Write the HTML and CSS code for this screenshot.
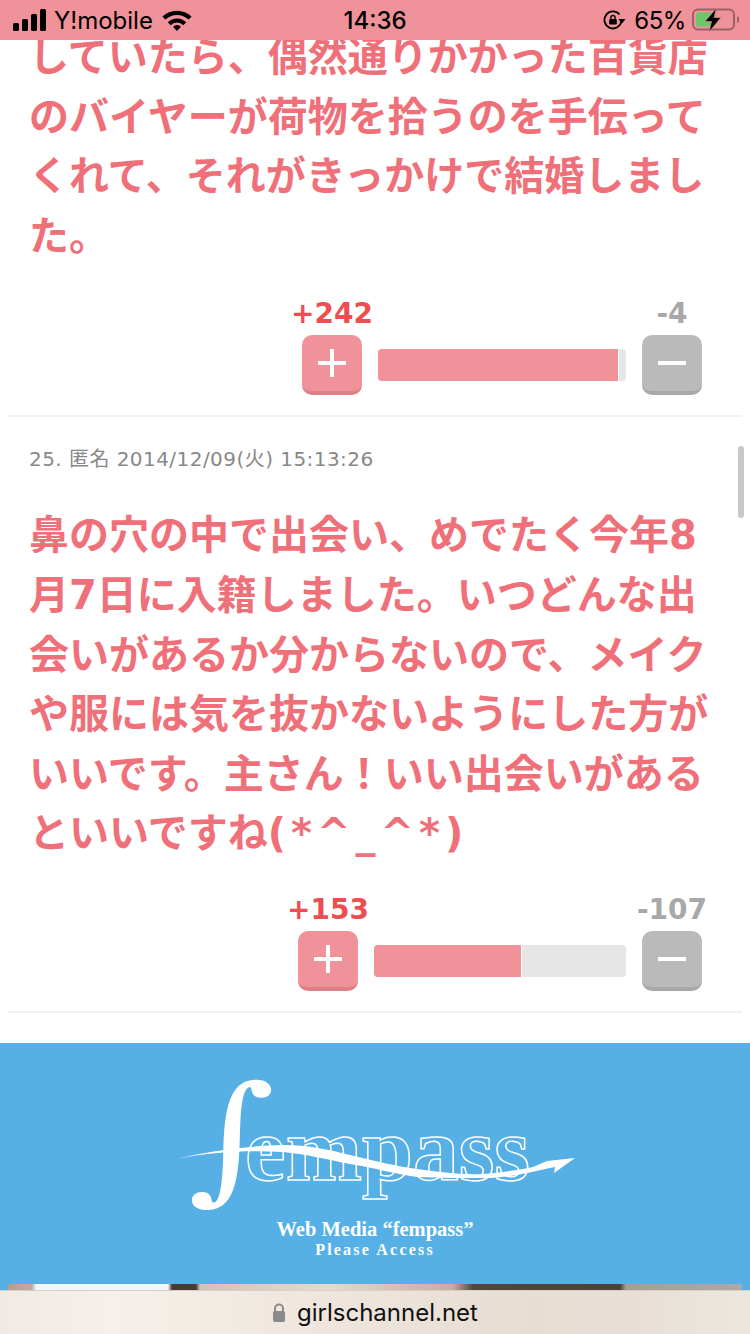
FILE: index.html
```html
<!DOCTYPE html>
<html lang="ja">
  <head>
    <meta charset="UTF-8" />
    <meta name="viewport" content="width=device-width, initial-scale=1.0" />
    <title>girlschannel</title>
    <link rel="stylesheet" href="styles.css">
  </head>
  <body>
    <div class="status-bar">
      <div class="status-left">
        <svg class="signal-icon" width="34" height="22" viewBox="0 0 34 22">
          <rect x="0" y="14" width="6" height="8" rx="1.5"/>
          <rect x="9" y="10" width="6" height="12" rx="1.5"/>
          <rect x="18" y="5" width="6" height="17" rx="1.5"/>
          <rect x="27" y="0" width="6" height="22" rx="1.5"/>
        </svg>
        <span class="carrier">Y!mobile</span>
        <svg class="wifi-icon" width="30" height="22" viewBox="0 0 30 22">
          <path d="M0.5 7.5 A21 21 0 0 1 29.5 7.5 L26.7 10.6 A17 17 0 0 0 3.3 10.6 Z"/>
          <path d="M5.8 13.2 A13 13 0 0 1 24.2 13.2 L21.4 16.2 A9 9 0 0 0 8.6 16.2 Z"/>
          <path d="M15 22 L11 17.8 A5.5 5.5 0 0 1 19 17.8 Z"/>
        </svg>
      </div>
      <div class="status-time">14:36</div>
      <div class="status-right">
        <svg class="rotate-icon" width="24" height="20" viewBox="0 0 24 20">
          <path d="M18.4 11 A8.5 8.5 0 1 1 16.5 4.5" fill="none" stroke="#000" stroke-width="1.8"/>
          <path d="M15.5 9 L22.5 9 L19 13.5 Z"/>
          <rect x="6.2" y="9" width="7.6" height="5.6" rx="1"/>
          <path d="M7.9 9 V7.6 A2.1 2.1 0 0 1 12.1 7.6 V9" fill="none" stroke="#000" stroke-width="1.4"/>
        </svg>
        <span class="battery-text">65%</span>
        <svg class="battery-icon" width="47" height="24" viewBox="0 0 47 24">
          <rect x="1" y="1.5" width="41" height="20" rx="5" fill="none" stroke="#9d6068" stroke-width="2"/>
          <rect x="4" y="4.5" width="20" height="14" rx="2" fill="#6cc66a"/>
          <path d="M45 8.5 A3 3 0 0 1 45 14.5 Z" fill="#9d6068"/>
          <path d="M24.5 0 L13 13.5 H19.5 L17 24 L29 9.5 H22 Z" stroke="#f09299" stroke-width="0.6"/>
        </svg>
      </div>
    </div>

    <div class="page">
      <div class="comment first">
        <p class="comment-body">していたら、偶然通りかかった百貨店のバイヤーが荷物を拾うのを手伝ってくれて、それがきっかけで結婚しました。</p>
        <div class="votes">
          <div class="vote-col">
            <span class="vote-num plus-num">+242</span>
            <div class="vote-btn plus-btn"><span class="bar-h"></span><span class="bar-v"></span></div>
          </div>
          <div class="meter" style="width: 248px"><div class="meter-fill" style="width: 240px"></div></div>
          <div class="vote-col">
            <span class="vote-num minus-num">-4</span>
            <div class="vote-btn minus-btn"><span class="bar-h"></span></div>
          </div>
        </div>
      </div>

      <div class="comment">
        <p class="comment-meta">25. 匿名 2014/12/09(火) 15:13:26</p>
        <p class="comment-body">鼻の穴の中で出会い、めでたく今年8月7日に入籍しました。いつどんな出会いがあるか分からないので、メイクや服には気を抜かないようにした方がいいです。主さん！いい出会いがあるといいですね<span class="kaomoji">(*^_^*)</span></p>
        <div class="votes tight">
          <div class="vote-col">
            <span class="vote-num plus-num">+153</span>
            <div class="vote-btn plus-btn"><span class="bar-h"></span><span class="bar-v"></span></div>
          </div>
          <div class="meter" style="width: 252px"><div class="meter-fill" style="width: 147px"></div></div>
          <div class="vote-col">
            <span class="vote-num minus-num">-107</span>
            <div class="vote-btn minus-btn"><span class="bar-h"></span></div>
          </div>
        </div>
      </div>

      <div class="banner">
        <svg class="logo" width="450" height="150" viewBox="0 0 450 150">
          <text class="logo-word" x="95" y="120" textLength="285" lengthAdjust="spacingAndGlyphs">empass</text>
          <text class="logo-f" transform="translate(38 125) scale(1.2 1)">∫</text>
          <path class="logo-swoosh" d="M26 99 C60 91 95 86 133 85 C160 85 180 90 200 95 C225 101 245 106 267 109 C290 112 310 115 333 114 C350 113 368 110 383 107 L397 101 L425 98 L404 113 L405 107 C385 111 360 118 333 118 C310 118 290 118 267 117 C245 114 225 108 200 104 C175 99 155 94 133 92 C95 90 60 92 26 99 Z"/>
        </svg>
        <p class="banner-title">Web Media “fempass”</p>
        <p class="banner-sub">Please Access</p>
        <div class="banner-photo"></div>
      </div>
    </div>

    <div class="scroll-thumb"></div>

    <div class="url-bar">
      <svg class="url-lock" width="14" height="20" viewBox="0 0 14 20">
        <path d="M3 9 V5.5 A4 4 0 0 1 11 5.5 V9" fill="none" stroke="#8a8a8a" stroke-width="2"/>
        <rect x="1" y="8" width="12" height="11" rx="2" fill="#8a8a8a"/>
      </svg>
      <span class="url-text">girlschannel.net</span>
    </div>
  </body>
</html>
```

FILE: styles.css
```css
body {
  margin: 0;
  width: 750px;
  height: 1334px;
  overflow: hidden;
  position: relative;
  background-color: white;
  font-family: "DejaVu Sans", "Noto Sans CJK JP", sans-serif;
}
p {
  margin: 0;
}

/* status bar */
.status-bar {
  position: absolute;
  z-index: 2;
  top: 0;
  left: 0;
  width: 750px;
  height: 40px;
  background-color: #f09299;
  display: flex;
  align-items: center;
  justify-content: space-between;
  box-sizing: border-box;
  padding: 0 11px 0 13px;
  color: black;
  font-family: Inter, "Liberation Sans", sans-serif;
}
.status-left {
  display: flex;
  align-items: center;
  width: 258px;
}
.carrier {
  font-size: 24px;
  margin-left: 7px;
}
.wifi-icon {
  margin-left: 9px;
}
.status-time {
  font-size: 24px;
  font-weight: 500;
}
.status-right {
  display: flex;
  align-items: center;
  justify-content: flex-end;
  width: 260px;
}
.battery-text {
  font-size: 24px;
  margin-left: 7px;
  letter-spacing: -0.4px;
}
.battery-icon {
  margin-left: 6px;
}

/* comments */
.page {
  padding-top: 28px;
}
.comment {
  margin: 0 8px;
  border-bottom: 2px solid #f2f2f2;
  padding: 29px 40px 20px 21px;
}
.comment.first {
  padding-top: 0;
}
.comment-meta {
  font-size: 20px;
  line-height: 26px;
  letter-spacing: 0.45px;
  color: #888;
  margin-bottom: 34px;
  margin-right: -40px;
}
.comment-body {
  font-family: "DejaVu Sans", "Noto Sans CJK JP", sans-serif;
  font-weight: 700;
  font-size: 40px;
  line-height: 59.6px;
  color: #ef7079;
  margin-right: -8px;
}
.kaomoji {
  letter-spacing: 5px;
}
.votes {
  display: flex;
  justify-content: flex-end;
  align-items: flex-end;
  gap: 16px;
  margin-top: 31px;
}
.votes.tight {
  margin-top: 29px;
}
.vote-col {
  width: 60px;
  display: flex;
  flex-direction: column;
  align-items: center;
}
.vote-num {
  font-size: 28px;
  font-weight: bold;
  line-height: 34px;
  margin-bottom: 4px;
  white-space: nowrap;
}
.plus-num {
  color: #ee4d52;
}
.minus-num {
  color: #a8a8a8;
}
.vote-btn {
  position: relative;
  width: 60px;
  height: 60px;
  box-sizing: border-box;
  border-radius: 10px;
}
.plus-btn {
  background-color: #f09299;
  border-bottom: 4px solid #dd8087;
}
.minus-btn {
  background-color: #bababa;
  border-bottom: 4px solid #a8a8a8;
}
.bar-h {
  position: absolute;
  left: 16px;
  top: 26px;
  width: 28px;
  height: 4px;
  background-color: white;
}
.bar-v {
  position: absolute;
  left: 28px;
  top: 14px;
  width: 4px;
  height: 28px;
  background-color: white;
}
.meter {
  height: 32px;
  margin-bottom: 14px;
  background-color: #e6e6e6;
  border-radius: 4px;
  overflow: hidden;
}
.meter-fill {
  height: 32px;
  background-color: #f09299;
  border-right: 1px solid white;
}

/* banner */
.banner {
  margin-top: 30px;
  height: 247px;
  background-color: #56b0e6;
  position: relative;
  overflow: hidden;
  text-align: center;
  color: white;
  font-family: "Liberation Serif", serif;
  font-weight: bold;
}
.logo {
  display: block;
  margin: 0 auto;
  padding-top: 17px;
  margin-bottom: 8px;
}
.logo-f {
  font-family: "DejaVu Serif", serif;
  font-weight: normal;
  font-size: 139px;
  fill: white;
}
.logo-word {
  font-family: "Liberation Serif", serif;
  font-weight: bold;
  font-size: 91px;
  fill: #56b0e6;
  stroke: white;
  stroke-width: 1.5px;
}
.logo-swoosh {
  fill: white;
}
.banner-title {
  font-size: 20.5px;
  line-height: 22px;
}
.banner-sub {
  font-size: 16px;
  line-height: 20px;
  letter-spacing: 2.2px;
}
.banner-photo {
  position: absolute;
  left: 8px;
  bottom: 0;
  width: 734px;
  height: 6px;
  background: linear-gradient(90deg, #b99c8e 0, #c4aa9d 24px, #f0f6fa 28px, #f0f6fa 160px, #4a3a34 164px, #4a3a34 188px, #d8c0b4 192px, #e8d8d0 320px, #c8aca0 445px, #57453c 465px, #4f3f38 612px, #a89c94 618px, #aaa 734px);
}

/* scrollbar */
.scroll-thumb {
  position: absolute;
  left: 738px;
  top: 446px;
  width: 6px;
  height: 72px;
  border-radius: 3px;
  background-color: #c8c8c8;
}

/* url bar */
.url-bar {
  position: absolute;
  left: 0;
  bottom: 0;
  width: 750px;
  height: 44px;
  display: flex;
  align-items: center;
  justify-content: center;
  gap: 11px;
  background: linear-gradient(90deg, #efeae3 0, #f5f1ea 110px, #f1e9e1 260px, #e6ddd3 530px, #e8e0d6 640px, #ece7dd 750px);
  border-top: 1px solid #d8cfc6;
  box-sizing: border-box;
}
.url-text {
  font-family: Inter, "Liberation Sans", sans-serif;
  font-size: 24px;
  color: #111;
}
```
